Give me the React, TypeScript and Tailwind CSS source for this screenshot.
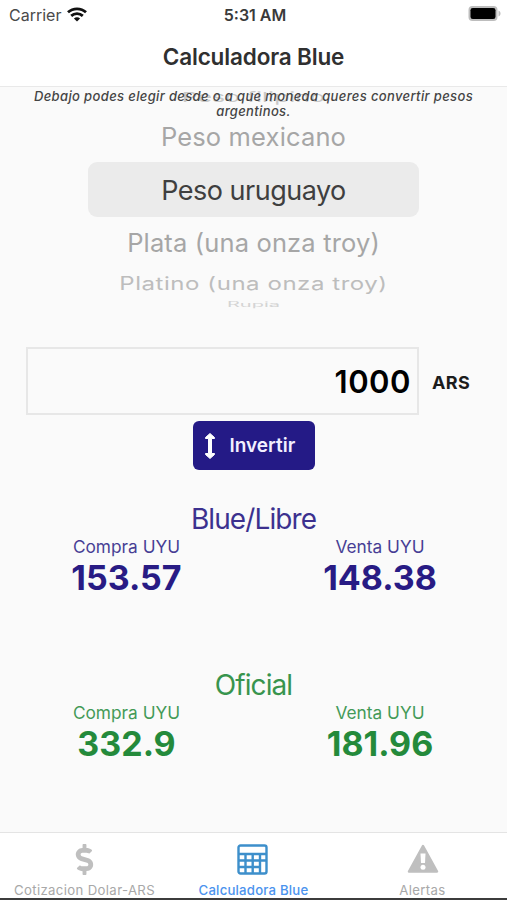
import { useState } from 'react';
import { FaDollarSign } from 'react-icons/fa';

type Rate = {
  label: string;
  value: string;
};

type RateSectionProps = {
  title: string;
  buy: Rate;
  sell: Rate;
  className: string;
};

function StatusBar() {
  return (
    <div className="flex h-[29px] items-center justify-between pl-[9px] pr-[6px]">
      <div className="flex w-[120px] items-center gap-[6px]">
        <span className="text-[16px] leading-none text-[#4a4a4a]">Carrier</span>
        <svg width="20" height="15" viewBox="0 0 20 15" fill="none" stroke="#111" strokeWidth="2.8">
          <path d="M1 5.3C6 .7 14 .7 19 5.3" />
          <path d="M4.2 8.9c3.3-3 8.3-3 11.6 0" />
          <path d="M10 14.6 6.9 11.5c1.8-1.6 4.4-1.6 6.2 0z" fill="#111" stroke="none" />
        </svg>
      </div>
      <span className="text-[16px] font-semibold leading-none text-[#3a3a3a]">5:31 AM</span>
      <div className="flex w-[120px] justify-end pb-[2px]">
        <svg width="33" height="17" viewBox="0 0 33 17">
          <rect x="0.5" y="1" width="29" height="15" rx="4" fill="#bdbdbd" />
          <path d="M30.5 5.5c2.7 1 2.7 5 0 6z" fill="#bdbdbd" />
          <rect x="2.5" y="3" width="25" height="11" rx="2.3" fill="#000" />
        </svg>
      </div>
    </div>
  );
}

function CurrencyPicker() {
  return (
    <div className="relative flex h-[260px] flex-col items-center overflow-hidden">
      {/* Row rolling out of the wheel, under the help text */}
      <div className="absolute left-0 top-[3px] w-full text-center text-[23px] leading-[14px] text-[#c8c8c8]">
        <span className="inline-block scale-x-[1.08] scale-y-[0.6]">Peso filipino</span>
      </div>
      <p className="relative mt-[2px] w-[460px] text-center text-[13px] font-medium italic leading-[15px] tracking-[0.36px] text-[#444]">
        Debajo podes elegir desde o a que moneda queres convertir pesos argentinos.
      </p>
      <div className="mt-[3px] h-[30px] text-[25.5px] leading-[30px] tracking-[0.15px] text-[#a6a6a6]">Peso mexicano</div>
      <div className="mt-[10px] flex h-[55px] w-[331px] items-center justify-center rounded-[9px] bg-[#ebebeb] pt-[2px] text-[27px] leading-none tracking-[-0.5px] text-[#3f3f3f]">
        Peso uruguayo
      </div>
      <div className="mt-[10px] h-[32px] text-[25.5px] leading-[32px] tracking-[0.15px] text-[#a6a6a6]">
        Plata (una onza troy)
      </div>
      <div className="mt-[14px] h-[22px] scale-y-[0.75] text-[24px] leading-[22px] tracking-[0.55px] text-[#bdbdbd]">
        Platino (una onza troy)
      </div>
      <div className="mt-[3px] h-[14px] text-center text-[20px] leading-[14px] text-[#d4d4d4]">
        <span className="inline-block scale-y-[0.35]">Rupia</span>
      </div>
    </div>
  );
}

function RateColumn({ label, value }: Rate) {
  return (
    <div className="flex flex-col items-center">
      <span className="text-[17.3px] leading-[22px] opacity-85">{label}</span>
      <span className="mt-[2px] text-[34px] font-bold leading-[36px]">{value}</span>
    </div>
  );
}

function RateSection({ title, buy, sell, className }: RateSectionProps) {
  return (
    <section className={className}>
      <h2 className="text-center text-[28px] leading-[34px] tracking-[-0.9px] opacity-90">{title}</h2>
      <div className="grid grid-cols-[253px_254px]">
        <RateColumn {...buy} />
        <RateColumn {...sell} />
      </div>
    </section>
  );
}

function TabBar() {
  return (
    <nav className="grid h-[68px] grid-cols-3 border-b-2 border-t border-b-[#3c3c3c] border-t-[#e4e4e4] bg-white text-[13.2px] leading-[16px] tracking-[0.35px] text-[#a8a8a8]">
      <button className="flex flex-col items-center pt-[11px]">
        <FaDollarSign size={31} color="#bfbfbf" />
        <span className="mt-[7px] whitespace-nowrap">Cotizacion Dolar-ARS</span>
      </button>
      <button className="flex flex-col items-center pt-[11px] text-[#4b93ee]">
        <svg className="mr-[3px]" width="31" height="31" viewBox="0 0 31 31" fill="none" stroke="#3d8fcb" strokeWidth="2.4">
          <rect x="1.5" y="1.5" width="28" height="28" rx="2" />
          <path d="M1 10h29M1 16.5h29M1 23h22M8.5 10v20M15.7 10v20M23 10v20" />
        </svg>
        <span className="mt-[7px] whitespace-nowrap font-medium tracking-[0.2px]">Calculadora Blue</span>
      </button>
      <button className="flex flex-col items-center pt-[11px]">
        <svg width="32" height="31" viewBox="0 0 32 31">
          <path
            d="M16 2 30 27.5H2z"
            fill="#bfbfbf"
            stroke="#bfbfbf"
            strokeWidth="2.5"
            strokeLinejoin="round"
          />
          <path d="M13.5 9.5h5l-.5 9.5h-4z" fill="#fff" />
          <circle cx="16" cy="23.3" r="2.5" fill="#fff" />
        </svg>
        <span className="mt-[7px]">Alertas</span>
      </button>
    </nav>
  );
}

export default function App() {
  const [amount, setAmount] = useState('1000');

  return (
    <div className="flex h-[900px] w-[507px] flex-col overflow-hidden bg-[#fafafa] font-['Inter',sans-serif]">
      <header className="h-[87px] border-b border-[#e9e9e9] bg-white">
        <StatusBar />
        <h1 className="text-center text-[22.5px] font-semibold leading-[56px] tracking-[-0.15px] text-[#303030]">
          Calculadora Blue
        </h1>
      </header>

      <main className="flex-1">
        <CurrencyPicker />

        <div className="flex items-center pl-[26px]">
          <input
            className="h-[68px] w-[393px] border-2 border-[#e7e7e7] bg-transparent pr-[6px] text-right text-[31px] font-semibold tracking-[0.5px] text-black outline-none"
            value={amount}
            onChange={(e) => setAmount(e.target.value)}
          />
          <span className="ml-[13px] mt-[3px] text-[18px] font-bold tracking-[0.4px] text-[#1c1c1c]">ARS</span>
        </div>

        <button className="mx-auto mt-[6px] flex h-[49px] w-[122px] items-center rounded-[6px] bg-[#241a86] pl-[11px] text-[19px] font-semibold text-[#f2f0ff]">
          <svg width="12" height="28" viewBox="0 0 12 28" fill="#fff" stroke="#fff" strokeLinejoin="round">
            <path d="M6 1.5 10.5 5.5v1H7.5v15h3v1L6 26.5 1.5 22.5v-1h3v-15h-3v-1z" />
          </svg>
          <span className="ml-[14px] mt-[2px]">Invertir</span>
        </button>

        <RateSection
          title="Blue/Libre"
          buy={{ label: 'Compra UYU', value: '153.57' }}
          sell={{ label: 'Venta UYU', value: '148.38' }}
          className="mt-[32px] text-[#281b84]"
        />
        <RateSection
          title="Oficial"
          buy={{ label: 'Compra UYU', value: '332.9' }}
          sell={{ label: 'Venta UYU', value: '181.96' }}
          className="mt-[72px] text-[#248a3b]"
        />
      </main>

      <TabBar />
    </div>
  );
}
